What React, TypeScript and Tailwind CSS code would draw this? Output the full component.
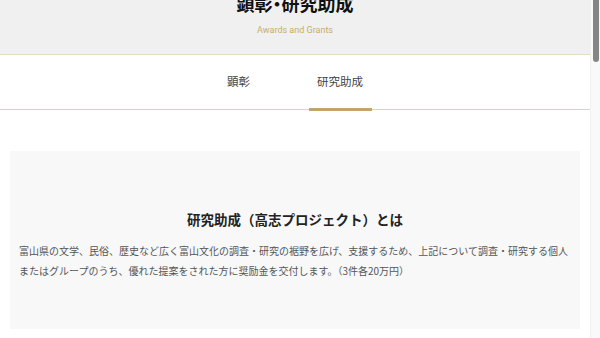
import React from "react";

const jp = { fontFamily: '"Noto Sans CJK JP", "Noto Sans", sans-serif' };

export default function App() {
  return (
    <div className="flex w-[600px] h-[338px] overflow-hidden bg-white" style={jp}>
      <div className="w-[590px] flex flex-col">
        <header className="h-[55px] bg-[#f0f0f0] border-b border-[#e6dcc4] flex flex-col items-center">
          <h1 className="mt-[-6px] text-[18px] leading-[18px] font-bold text-[#111] [font-feature-settings:'palt']">
            顕彰・研究助成
          </h1>
          <p className="mt-[13px] text-[9px] leading-[10px] text-[#c8ac6c]" style={{ fontFamily: 'Roboto, "Noto Sans", sans-serif' }}>
            Awards and Grants
          </p>
        </header>
        <nav className="h-[55px] border-b border-[#e0d4b6] flex justify-center items-stretch gap-[50px]">
          <div className="w-[40px] flex items-center justify-center text-[11.5px] text-[#444]">顕彰</div>
          <div className="w-[63px] flex items-center justify-center text-[11.5px] text-[#444] border-b-[3px] border-[#c6a26c] mb-[-2px] pt-[1px]">
            研究助成
          </div>
        </nav>
        <section className="mt-[41px] mx-[10px] h-[178px] bg-[#f8f8f8] flex flex-col items-center">
          <h2 className="mt-[58px] text-[13.5px] leading-[20px] font-bold text-[#222]">
            研究助成（高志プロジェクト）とは
          </h2>
          <p className="mt-[12px] self-stretch px-[9px] text-[10px] leading-[20px] text-[#555]">
            富山県の文学、民俗、歴史など広く富山文化の調査・研究の裾野を広げ、支援するため、上記について調査・研究する個人またはグループのうち、優れた提案をされた方に奨励金を交付します。（3件各20万円）
          </p>
        </section>
      </div>
      <div className="w-[10px] h-full bg-[#f9f9f9] border-l border-[#f0f0f0] flex justify-center">
        <div className="w-[6px] h-[62px] rounded-b-[3px] bg-[#858585]" />
      </div>
    </div>
  );
}
